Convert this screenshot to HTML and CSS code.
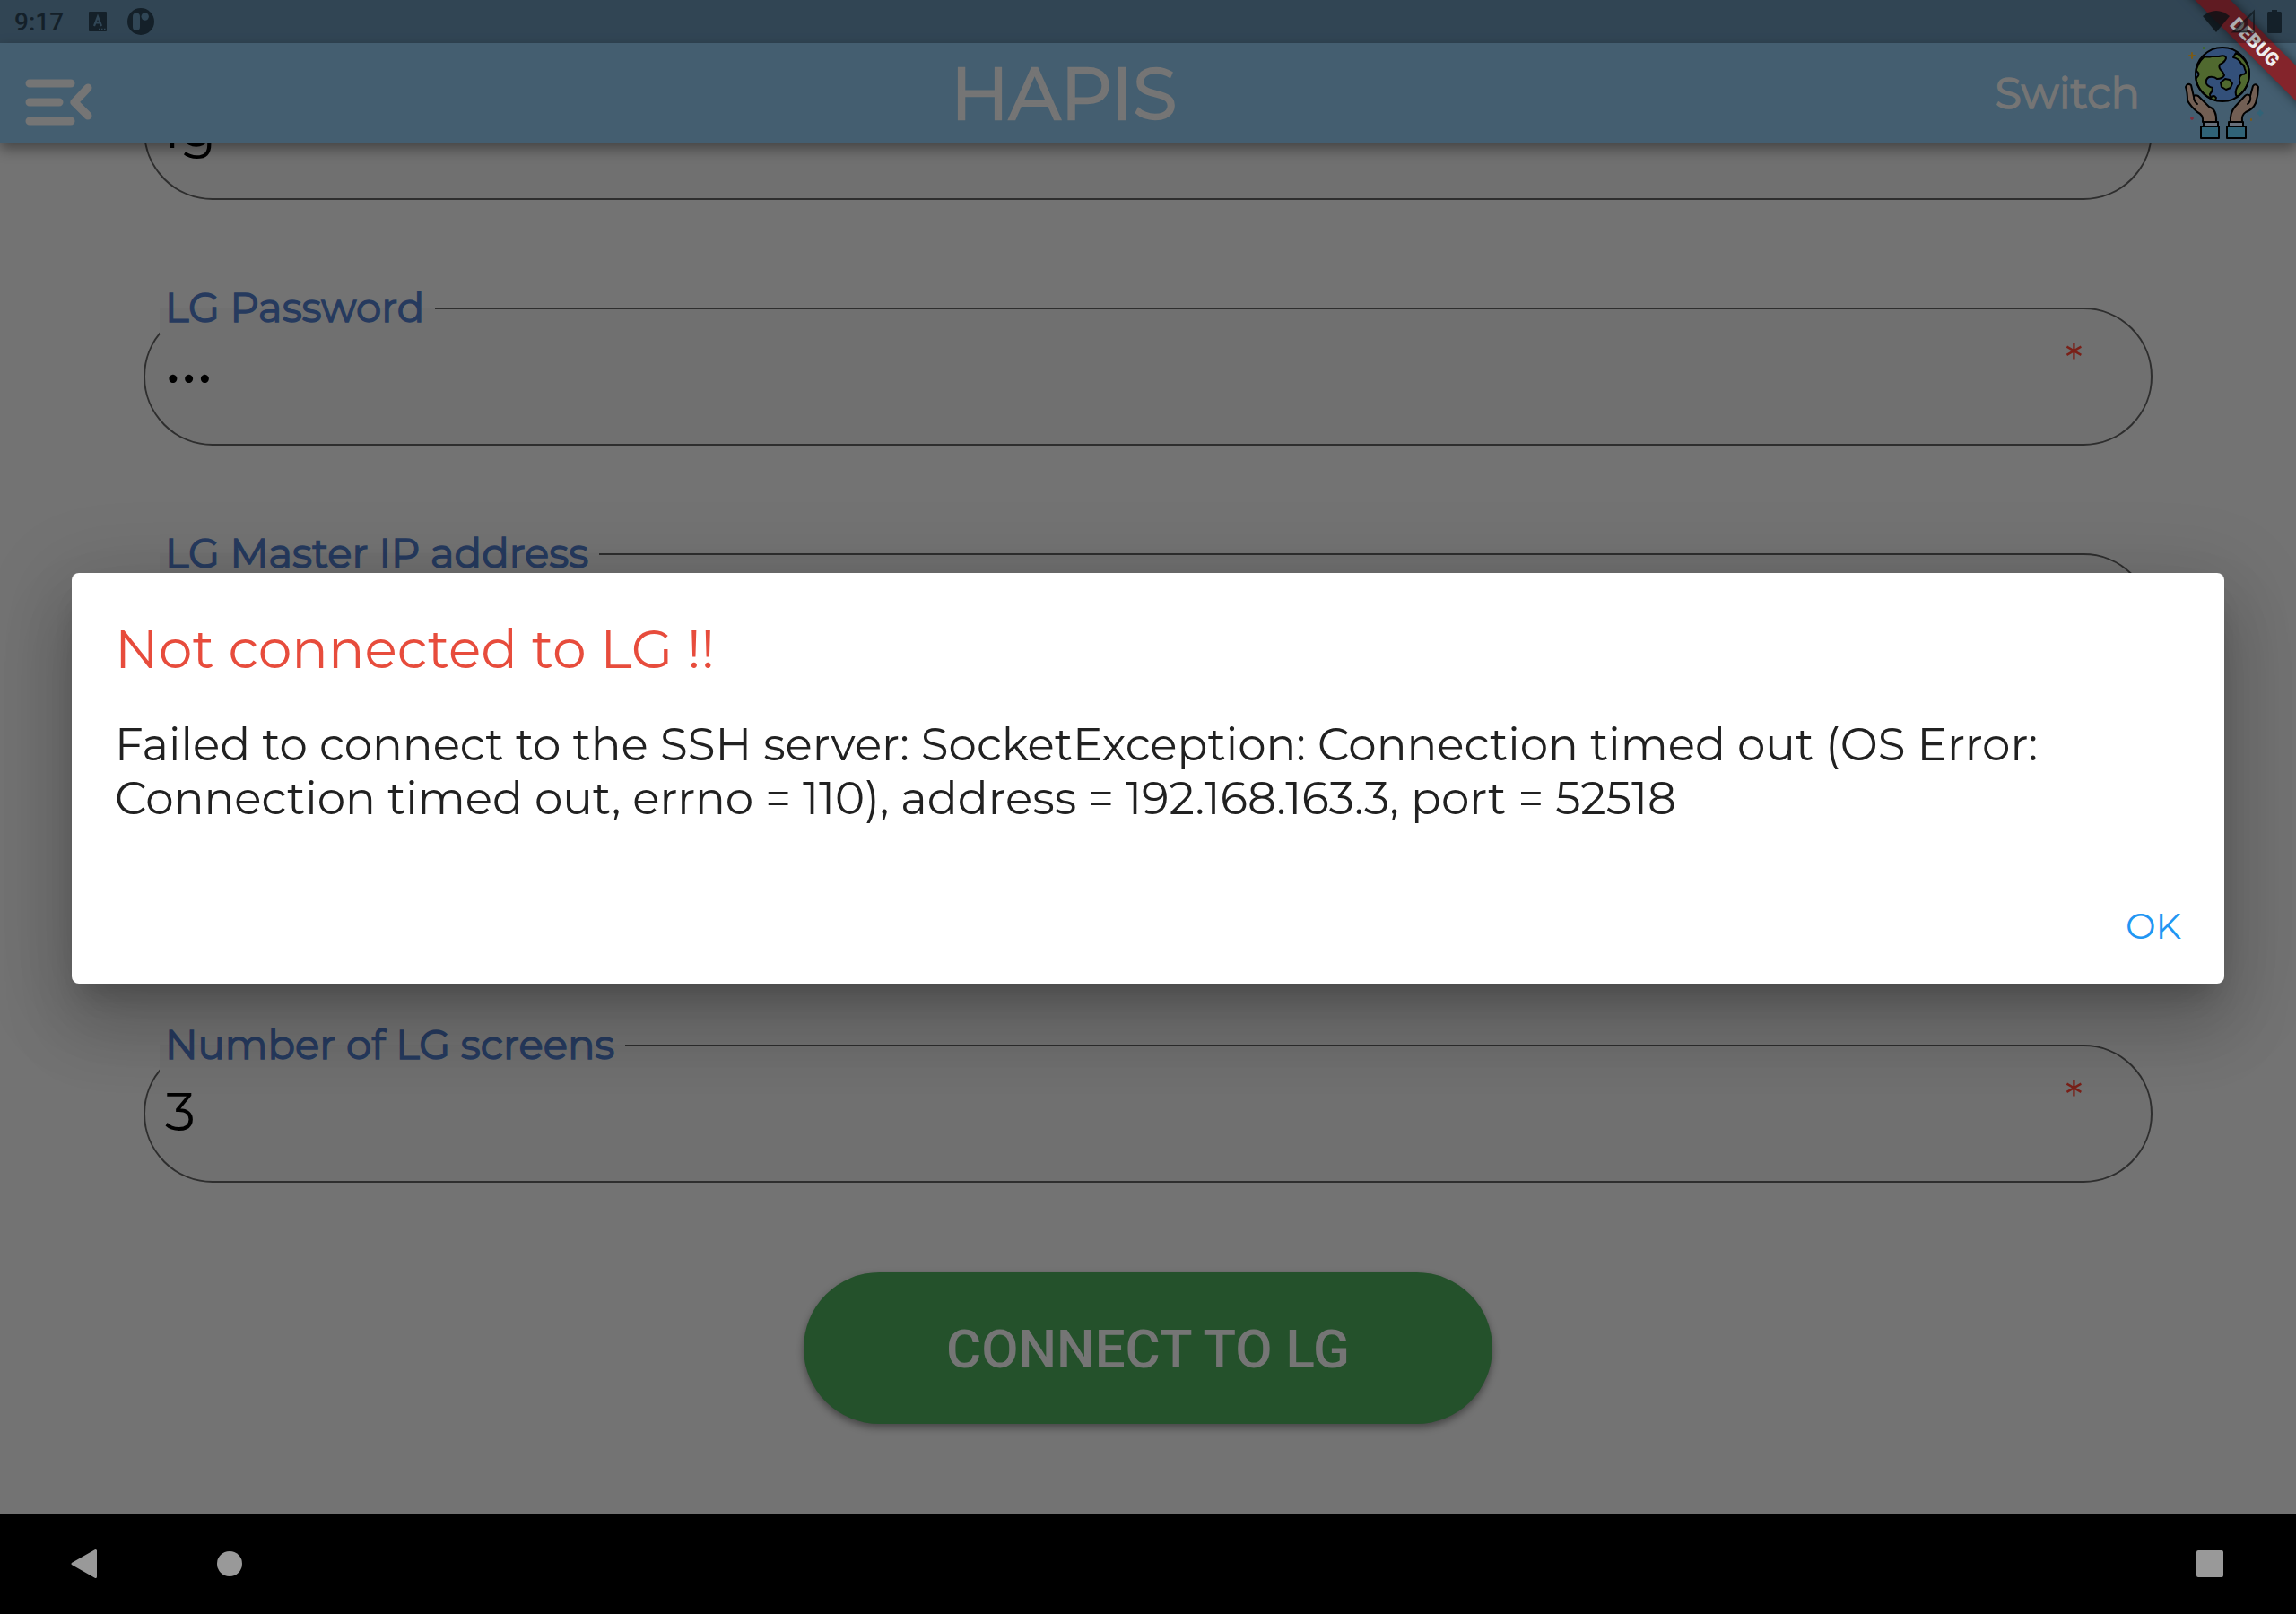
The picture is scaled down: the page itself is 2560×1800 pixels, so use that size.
FILE: index.html
```html
<!DOCTYPE html>
<html lang="en">
<head>
<meta charset="utf-8">
<title>HAPIS</title>
<link rel="stylesheet" href="styles.css">
</head>
<body>
<div class="screen">
  <div class="status-bar">
    <div class="status-left">
      <span class="clock">9:17</span>
      <svg class="status-letter" viewBox="0 0 20 22"><rect width="20" height="22" rx="1" fill="#142029"/><path d="M6 16 10 5.500l4 10.500M7.500 12.500h5" fill="none" stroke="#304656" stroke-width="2.200"/><path d="M11 19.500h1.500M14 19.500h1.500M17 19.500h1.500" stroke="#304656" stroke-width="1.500"/></svg>
      <svg class="status-disc" viewBox="0 0 30 30"><circle cx="15" cy="15" r="15" fill="#142029"/><rect x="6" y="5.500" width="8" height="19.500" rx="4" fill="#304656"/><circle cx="19.700" cy="9.500" r="4.200" fill="#304656"/></svg>
    </div>
    <svg class="status-right" viewBox="0 0 90 28"><path d="M0 8Q15-4 30 8L15 26Z" fill="#0a1014" fill-opacity=".8"/><path d="M34 25.500 57 3v22.500Z" fill="none" stroke="#0a1014" stroke-opacity=".6" stroke-width="2"/><path d="M34 26 51 10v16z" fill="#0a1014" fill-opacity=".5"/><path d="M77 1h6v2h3.500q1.500 0 1.500 1.500v21q0 1.500-1.500 1.500h-13q-1.500 0-1.500-1.500v-21Q72 3 73.500 3H77Z" fill="#142029"/></svg>
  </div>
  <header class="app-bar">
    <button class="menu-button" aria-label="Open menu"><svg class="menu-icon" viewBox="0 0 76 52"><path d="M5 5h46M5 26h33M5 47h46M70 10 55 26l15 15" fill="none" stroke="#757575" stroke-width="9" stroke-linecap="round" stroke-linejoin="round"/></svg></button>
    <h1 class="app-title">HAPIS</h1>
    <div class="app-actions">
      <button class="switch-button">Switch</button>
      <svg class="logo" viewBox="0 0 84 104" stroke-linecap="round" stroke-linejoin="round">
        <circle cx="42" cy="31" r="30" fill="#33507a"/>
        <path d="M22 11Q26 12 30 11L38 11Q46 9 46 13Q45 17 39 20Q37 24 42 28L44 32Q42 36 36 36Q33 33 27 34Q23 36 24 41Q25 44 31 46Q31 50 28 53L29 58Q12 49 12 31Q13 19 22 11ZM57 7Q72 16 72 31Q71 48 58 56Q55 51 59 44Q63 42 61 38Q60 33 64 31Q70 31 67 25Q66 20 63 19Q60 13 54 12Z" fill="#50692f" stroke="#000" stroke-width="2"/>
        <path d="m45 36 5 1 3 4-2 5-5 2-5-3-1-5ZM29 57q3-4 6 0l-1 3" fill="#50692f" stroke="#000" stroke-width="2"/>
        <path d="M13 27q5 4 0 8" fill="#33507a" stroke="#000" stroke-width="2"/>
        <circle cx="42" cy="31" r="30" fill="none" stroke="#000" stroke-width="2"/>
        <path d="M20 84Q21 76 14 73Q6 66 3 60Q3 51 1 45Q3 40 7 43L10 56Q11 53 15 55L27 67Q36 70 35 84ZM10 56Q10 61 14 64" fill="#725f54" stroke="#000" stroke-width="2"/>
        <path d="M51 84Q50 74 56 67L67 55Q70 52 73 55L76 44Q79 40 82 45Q82 54 79 63Q76 70 68 73Q63 76 64 84ZM73 55Q74 61 70 64" fill="#725f54" stroke="#000" stroke-width="2"/>
        <path d="M21 84h16v6H21zM49 84h16v6H49z" fill="#68707a" stroke="#000" stroke-width="2"/>
        <path d="M18 89h20v13H18zM47 89h21v13H47z" fill="#306377" stroke="#000" stroke-width="2"/>
        <path d="M8 7v6M5 10h6" stroke="#7a5b18" stroke-width="2"/><path d="M21 1v1" stroke="#3d6b22" stroke-width="2"/><path d="M8 79v2M7 80h2" stroke="#7d2c3b" stroke-width="2"/><path d="M84 72v4M82 74h4" stroke="#306377" stroke-width="3"/><path d="M74 81v1" stroke="#7a5b18" stroke-width="2"/>
      </svg>
    </div>
  </header>
  <main class="content">
    <form class="form">
      <div class="field"><input class="field-input" aria-label="LG Username" type="text" value="lg"></div>
      <div class="field"><label class="field-label" for="pass">LG Password</label><input class="field-input" id="pass" type="password" value="lqg"><span class="required">*</span></div>
      <div class="field"><label class="field-label" for="ip">LG Master IP address</label><input class="field-input" id="ip" type="text"></div>
      <div class="field"><input class="field-input" aria-label="LG Port" type="text"></div>
      <div class="field"><label class="field-label" for="screens">Number of LG screens</label><input class="field-input" id="screens" type="text" value="3"><span class="required">*</span></div>
      <button class="connect-button" type="button">CONNECT TO LG</button>
    </form>
  </main>
  <nav class="nav-bar">
    <div class="nav-left">
      <button class="nav-button" aria-label="Back"><svg class="nav-icon" viewBox="0 0 32 32"><path d="M3 16 28.500 1.500v29Z" fill="#999" stroke="#999" stroke-width="3" stroke-linejoin="round"/></svg></button>
      <button class="nav-button" aria-label="Home"><svg class="nav-icon" viewBox="0 0 32 32"><circle cx="16" cy="16" r="14" fill="#999"/></svg></button>
    </div>
    <button class="nav-button" aria-label="Recent apps"><svg class="nav-icon" viewBox="0 0 32 32"><rect x="1" y="1" width="30" height="30" rx="2" fill="#999"/></svg></button>
  </nav>
  <div class="overlay">
    <section class="dialog" role="alertdialog" aria-labelledby="dialog-title">
      <h2 class="dialog-title" id="dialog-title">Not connected to LG !!</h2>
      <p class="dialog-text">Failed to connect to the SSH server: SocketException: Connection timed out (OS Error: Connection timed out, errno = 110), address = 192.168.163.3, port = 52518</p>
      <button class="ok-button">OK</button>
    </section>
  </div>
  <div class="debug-corner"><span class="debug-banner">DEBUG</span></div>
</div>
</body>
</html>
```
FILE: styles.css
```css
* { box-sizing: border-box; }
body { margin: 0; font-family: Montserrat, Inter, sans-serif; }
button { border: 0; padding: 0; background: none; font: inherit; color: inherit; }
svg { display: block; overflow: visible; }
.screen { position: relative; height: 100vh; display: flex; flex-direction: column; overflow: hidden; background: #445e70; }

/* The translucent system bar tints whatever lies beneath it. */
.status-bar { flex: none; position: relative; z-index: 4; height: 48px; padding: 0 14px 0 16px; display: flex; justify-content: space-between; align-items: center; background: rgba(0,4,12,.27); }
.status-left { display: flex; align-items: center; }
.clock { width: 83px; padding-top: 2px; font: 500 28px/32px Roboto, sans-serif; color: #142029; }
.status-letter { width: 20px; height: 22px; margin-right: 23px; }
.status-disc { width: 30px; height: 30px; }
.status-right { width: 90px; height: 28px; }

.app-bar { flex: none; position: relative; z-index: 1; height: 112px; padding: 0 40px 0 28px; display: flex; align-items: center; background: #445e70; color: #757575; box-shadow: 0 6px 14px rgba(0,0,0,.4); }
.menu-button { width: 120px; padding-top: 20px; }
.menu-icon { width: 76px; height: 52px; }
.app-title { flex: 1; margin: 0; padding-top: 2px; text-align: center; font-size: 80px; line-height: 100px; font-weight: 400; -webkit-text-stroke: 0.03em; }
.app-actions { display: flex; align-items: center; gap: 50px; }
.switch-button { font-size: 48px; line-height: 60px; -webkit-text-stroke: 0.03em; }
.logo { width: 84px; height: 104px; }

.content { flex: 1; min-height: 0; overflow: hidden; padding: 0 160px 100px; display: flex; flex-direction: column; justify-content: flex-end; background: #737373; }
.form { display: flex; flex-direction: column; gap: 120px; }
.field { position: relative; height: 154px; padding: 0 76px 0 22px; display: flex; align-items: center; border: 2px solid #2e2e2e; border-radius: 77px; background: #707070; }
.field-label { position: absolute; left: 16px; top: -32px; padding: 0 12px 0 6px; font-size: 45px; line-height: 60px; color: #263a5e; -webkit-text-stroke: 0.03em; background: linear-gradient(#737373 50%, #707070 50%); }
.field-input { flex: 1; min-width: 0; height: 76px; padding: 0 0 6px; border: 0; outline: 0; background: none; font: 60px/70px Montserrat, Inter, sans-serif; color: #000; }
.required { align-self: flex-start; padding-top: 28px; font-size: 50px; line-height: 60px; color: #7a2018; }
.connect-button { align-self: center; width: 768px; height: 169px; margin-top: -20px; padding-top: 2px; border-radius: 85px; background: #24512b; color: #757575; font: 500 60px/72px Roboto, sans-serif; box-shadow: 0 4px 8px rgba(0,0,0,.4); }

.nav-bar { flex: none; height: 112px; padding: 0 80px 0 78px; display: flex; align-items: center; justify-content: space-between; background: #000; }
.nav-left { display: flex; gap: 130px; }
.nav-icon { width: 32px; height: 32px; }

.overlay { position: absolute; z-index: 2; inset: 48px 0 112px; padding: 0 80px; display: grid; align-items: center; }
.dialog { padding: 48px 48px 32px; display: flex; flex-direction: column; background: #fff; border-radius: 8px; box-shadow: 0 22px 30px -14px rgba(0,0,0,.2), 0 48px 76px 6px rgba(0,0,0,.14), 0 18px 92px 16px rgba(0,0,0,.12); }
.dialog-title { margin: 0 0 40px; font-size: 60px; line-height: 74px; font-weight: 400; color: #e74c3c; }
.dialog-text { margin: 0 0 80px; font-size: 50px; line-height: 60px; color: #212121; }
.ok-button { align-self: flex-end; font-size: 40px; line-height: 64px; color: #2196f3; }

.debug-corner { position: absolute; z-index: 3; top: 0; right: 0; width: 160px; height: 160px; overflow: hidden; pointer-events: none; }
.debug-banner { position: absolute; top: 33px; left: -6px; width: 240px; height: 28px; transform: rotate(45deg); background: #84242b; color: #eee; font: 900 21px/28px Roboto, sans-serif; text-align: center; box-shadow: 0 0 12px rgba(0,0,0,.5); }
```
